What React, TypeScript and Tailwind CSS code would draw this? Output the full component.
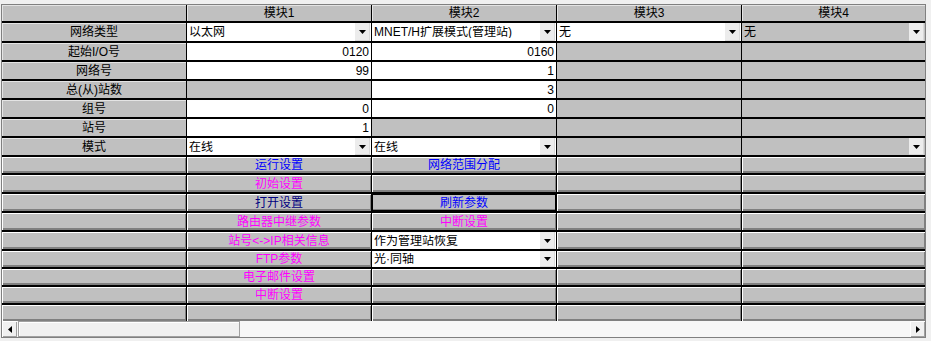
import React from "react";

type Cell = {
  k: "label" | "flat" | "num" | "sel" | "btn";
  t?: string;
  c?: string;
  gray?: boolean;
  focus?: boolean;
};

const BLUE = "text-[#0000ff]";
const PINK = "text-[#ff00ff]";
const NAVY = "text-[#000080]";

const L = (t = ""): Cell => ({ k: "label", t });
const F: Cell = { k: "flat" };
const N = (t: string): Cell => ({ k: "num", t });
const S = (t: string, gray = false): Cell => ({ k: "sel", t, gray });
const B = (t = "", c = BLUE, focus = false): Cell => ({ k: "btn", t, c, focus });

const ROWS: Cell[][] = [
  [L(), L("模块1"), L("模块2"), L("模块3"), L("模块4")],
  [L("网络类型"), S("以太网"), S("MNET/H扩展模式(管理站)"), S("无"), S("无", true)],
  [L("起始I/O号"), N("0120"), N("0160"), F, F],
  [L("网络号"), N("99"), N("1"), F, F],
  [L("总(从)站数"), F, N("3"), F, F],
  [L("组号"), N("0"), N("0"), F, F],
  [L("站号"), N("1"), F, F, F],
  [L("模式"), S("在线"), S("在线"), F, S("", true)],
  [B(), B("运行设置"), B("网络范围分配"), B(), B()],
  [B(), B("初始设置", PINK), B(), B(), B()],
  [B(), B("打开设置", NAVY), B("刷新参数", BLUE, true), B(), B()],
  [B(), B("路由器中继参数", PINK), B("中断设置", PINK), B(), B()],
  [B(), B("站号<->IP相关信息", PINK), S("作为管理站恢复"), B(), B()],
  [B(), B("FTP参数", PINK), S("光·同轴"), B(), B()],
  [B(), B("电子邮件设置", PINK), B(), B(), B()],
  [B(), B("中断设置", PINK), B(), B(), B()],
  [B(), B(), B(), B(), B()],
];

const HEIGHTS = [
  "h-[18px]", "h-[20px]", "h-[19px]", "h-[19px]", "h-[19px]", "h-[19px]", "h-[19px]",
  "h-[19px]", "h-[18px]", "h-[19px]", "h-[19px]", "h-[19px]", "h-[19px]", "h-[18px]",
  "h-[18px]", "h-[18px]", "h-[16px]",
];

const WIDTHS = ["w-[184px]", "w-[185px]", "w-[185px]", "w-[185px]", "w-[184px]"];

const raised = "shadow-[inset_1px_1px_0_#ffffff,inset_-1px_-2px_0_#808080]";

function Arrow() {
  return (
    <div className="flex h-full w-[15px] shrink-0 items-center justify-center bg-[#ececec] shadow-[inset_-1px_-1px_0_#d8d8d8]">
      <svg width="7" height="4" viewBox="0 0 7 4">
        <polygon points="0,0 7,0 3.5,4" fill="#000" />
      </svg>
    </div>
  );
}

function GridCell({ cell, i }: { cell: Cell; i: number }) {
  const base = `${WIDTHS[i]} h-full shrink-0 ${i > 0 ? "border-l border-black" : ""}`;
  if (cell.k === "label") {
    return (
      <div className={`${base} flex items-center justify-center bg-[#c0c0c0] text-black shadow-[inset_1px_1px_0_#e4e4e4]`}>
        {cell.t}
      </div>
    );
  }
  if (cell.k === "flat") return <div className={`${base} bg-[#c0c0c0]`} />;
  if (cell.k === "num") {
    return (
      <div className={`${base} flex items-center justify-end bg-white pr-[2px] text-black`}>
        {cell.t}
      </div>
    );
  }
  if (cell.k === "sel") {
    return (
      <div className={`${base} flex items-center pr-[1px] ${cell.gray ? "bg-[#c0c0c0]" : "bg-white"}`}>
        <span className="flex-1 truncate pl-[2px] text-black">{cell.t}</span>
        <Arrow />
      </div>
    );
  }
  return (
    <div className={`${base} flex items-center justify-center bg-[#c0c0c0] ${raised} ${cell.c}`}>
      {cell.focus ? (
        <div className="flex h-full w-full items-center justify-center shadow-[inset_0_0_0_1px_#000000]">
          {cell.t}
        </div>
      ) : (
        cell.t
      )}
    </div>
  );
}

export default function App() {
  return (
    <div
      className="h-[341px] w-[931px] overflow-hidden bg-[#f0f0f0] pt-[4px] pl-[1px] text-[12px] leading-none"
      style={{ fontFamily: '"Liberation Sans", "Noto Sans CJK SC", sans-serif' }}
    >
      <div className="w-[925px] border border-[#808080]">
        {ROWS.map((row, r) => (
          <div
            key={r}
            className={`flex ${HEIGHTS[r]} ${r < ROWS.length - 1 ? "border-b-2 border-black" : ""}`}
          >
            {row.map((cell, i) => (
              <GridCell key={i} cell={cell} i={i} />
            ))}
          </div>
        ))}
        <div className="flex h-[16px] bg-[#f7f7f7]">
          <div className="flex w-[15px] items-center justify-center bg-[#f0f0f0] shadow-[inset_1px_1px_0_#ffffff,inset_-1px_-1px_0_#a0a0a0]">
            <svg width="4" height="7" viewBox="0 0 4 7">
              <polygon points="4,0 4,7 0,3.5" fill="#000" />
            </svg>
          </div>
          <div className="ml-[1px] w-[222px] border border-[#a0a0a0] bg-[#f0f0f0] shadow-[inset_1px_1px_0_#ffffff]" />
          <div className="flex-1" />
          <div className="flex w-[15px] items-center justify-center bg-[#f0f0f0] shadow-[inset_1px_1px_0_#ffffff,inset_-1px_-1px_0_#a0a0a0]">
            <svg width="4" height="7" viewBox="0 0 4 7">
              <polygon points="0,0 0,7 4,3.5" fill="#000" />
            </svg>
          </div>
        </div>
      </div>
    </div>
  );
}
